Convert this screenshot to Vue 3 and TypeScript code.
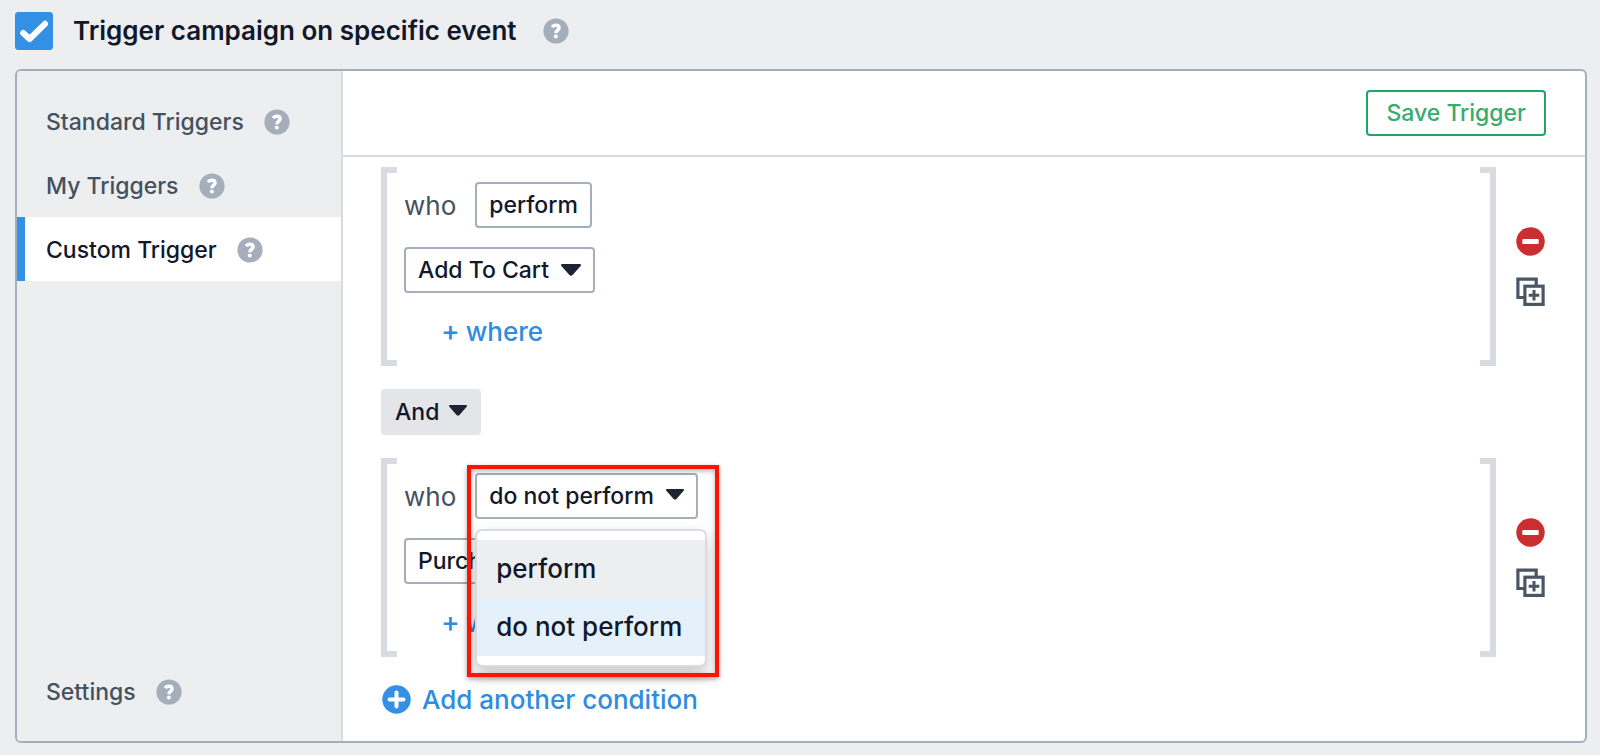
<script setup lang="ts">
import { defineComponent, h, ref } from 'vue'

interface NavItem {
  id: string
  label: string
}

interface Condition {
  id: number
  verb: string
  event: string
  open: boolean
}

const enabled = ref(true)
const activeTab = ref('custom')
const operator = ref('And')
const verbs: string[] = ['perform', 'do not perform']

const navItems: NavItem[] = [
  { id: 'standard', label: 'Standard Triggers' },
  { id: 'mine', label: 'My Triggers' },
  { id: 'custom', label: 'Custom Trigger' },
]

const conditions = ref<Condition[]>([
  { id: 1, verb: 'perform', event: 'Add To Cart', open: false },
  { id: 2, verb: 'do not perform', event: 'Purchase', open: true },
])

function pick(condition: Condition, verb: string) {
  condition.verb = verb
  condition.open = false
}

const HelpIcon = defineComponent({
  render: () =>
    h('svg', { viewBox: '0 0 26 26', width: 26, height: 26, role: 'img', 'aria-label': 'Help' }, [
      h('circle', { cx: 13, cy: 13, r: 12.6, fill: '#a5aebb' }),
      h('path', {
        d: 'M9.3 9.2C10 7.9 11.3 7.3 12.9 7.3C14.9 7.3 16.1 8.3 16.1 9.9C16.1 12.2 13 12.1 12.9 15.2',
        fill: 'none',
        stroke: '#fff',
        'stroke-width': 3.4,
      }),
      h('circle', { cx: 12.8, cy: 18.5, r: 2, fill: '#fff' }),
    ]),
})

const CaretIcon = defineComponent({
  render: () =>
    h('svg', { viewBox: '0 0 20 12', 'aria-hidden': 'true' }, [
      h('path', {
        d: 'M1.2 0H18.8C19.9 0 20.3 1.1 19.6 1.9L11.6 10.9C10.7 11.9 9.3 11.9 8.4 10.9L0.4 1.9C-0.3 1.1 0.1 0 1.2 0Z',
        fill: '#1c2333',
      }),
    ]),
})
</script>

<template>
  <div class="page">
    <header class="title-row">
      <label class="toggle">
        <span class="check">
          <input v-model="enabled" type="checkbox" />
          <svg v-if="enabled" viewBox="0 0 38 38" aria-hidden="true">
            <path d="M8.2 21L14.6 27L30 11.8" fill="none" stroke="#fff" stroke-width="6" stroke-linecap="round" stroke-linejoin="round" />
          </svg>
        </span>
        <span class="title">Trigger campaign on specific event</span>
      </label>
      <HelpIcon />
    </header>

    <main class="panel">
      <nav class="sidebar">
        <button
          v-for="item in navItems"
          :key="item.id"
          type="button"
          class="nav-item"
          :class="{ active: item.id === activeTab }"
          @click="activeTab = item.id"
        >
          {{ item.label }}
          <HelpIcon />
        </button>
        <button type="button" class="nav-item settings">
          Settings
          <HelpIcon />
        </button>
      </nav>

      <section class="content">
        <div class="toolbar">
          <button type="button" class="save">Save Trigger</button>
        </div>

        <div class="builder">
          <template v-for="(condition, index) in conditions" :key="condition.id">
            <label v-if="index > 0" class="picker operator">
              <select v-model="operator" aria-label="Operator">
                <option>And</option>
                <option>Or</option>
              </select>
              <CaretIcon class="caret small" />
            </label>

            <div class="condition">
              <div class="group">
                <div class="line">
                  <span class="who">who</span>
                  <div class="verb">
                    <button
                      type="button"
                      class="box"
                      aria-haspopup="listbox"
                      :aria-expanded="condition.open"
                      @click="condition.open = !condition.open"
                    >
                      {{ condition.verb }}
                      <CaretIcon v-if="index > 0" class="caret small" />
                    </button>
                    <div v-if="condition.open" class="highlight"></div>
                    <ul v-if="condition.open" class="menu" role="listbox">
                      <li
                        v-for="verb in verbs"
                        :key="verb"
                        role="option"
                        :aria-selected="verb === condition.verb"
                        :class="{ selected: verb === condition.verb }"
                        @click="pick(condition, verb)"
                      >
                        {{ verb }}
                      </li>
                    </ul>
                  </div>
                </div>
                <label class="picker event">
                  <select v-model="condition.event" aria-label="Event">
                    <option>{{ condition.event }}</option>
                  </select>
                  <CaretIcon class="caret" />
                </label>
                <button type="button" class="link where"><span class="plus">+</span> where</button>
              </div>

              <div class="actions">
                <button type="button" class="icon-button" aria-label="Remove condition">
                  <svg viewBox="0 0 29 29" width="29" height="29">
                    <circle cx="14.5" cy="14.5" r="14.2" fill="#cb2e30" />
                    <rect x="6.3" y="12" width="16.4" height="5" rx="1" fill="#fff" />
                  </svg>
                </button>
                <button type="button" class="icon-button" aria-label="Duplicate condition">
                  <svg viewBox="0 0 29 29" width="29" height="29" fill="none" stroke="#4a5663">
                    <path d="M8 20.5H1.9V2.2H20.2V8" stroke-width="3.2" />
                    <rect x="8.9" y="9.2" width="18.2" height="18.2" stroke-width="3.2" />
                    <path d="M18 13V23.6M12.7 18.3H23.3" stroke-width="3" />
                  </svg>
                </button>
              </div>
            </div>
          </template>

          <button type="button" class="link add">
            <svg viewBox="0 0 29 29" width="29" height="29" aria-hidden="true">
              <circle cx="14.5" cy="14.5" r="14.2" fill="#3490e5" />
              <path d="M14.5 7.5V21.5M7.5 14.5H21.5" stroke="#fff" stroke-width="4" stroke-linecap="round" />
            </svg>
            Add another condition
          </button>
        </div>
      </section>
    </main>
  </div>
</template>

<style>
body {
  margin: 0;
  background: #edeef0;
}
</style>

<style scoped>
.page {
  box-sizing: border-box;
  min-height: 100vh;
  padding: 12px 13px 12px 15px;
  display: flex;
  flex-direction: column;
  gap: 19px;
  font-family: Inter, 'Liberation Sans', sans-serif;
  font-size: 23px;
  font-weight: 500;
  color: #12182a;
}

button,
select {
  margin: 0;
  font: inherit;
  color: inherit;
  cursor: pointer;
}

svg {
  display: block;
  flex: none;
}

.title-row {
  display: flex;
  align-items: center;
  gap: 26px;
}

.toggle {
  display: flex;
  align-items: center;
  gap: 20px;
}

.check {
  display: grid;
  width: 38px;
  height: 38px;
}

.check > * {
  grid-area: 1 / 1;
}

.check input {
  appearance: none;
  margin: 0;
  width: 38px;
  height: 38px;
  border: 1px solid #3490e5;
  border-radius: 3px;
}

.check input:checked {
  background: #3490e5;
}

.check svg {
  pointer-events: none;
}

.title {
  font-size: 26px;
  line-height: 38px;
  font-weight: 600;
}

.panel {
  flex: 1;
  display: flex;
  border: 2px solid #a3afbd;
  border-radius: 6px;
  background: #fff;
}

.sidebar {
  flex: none;
  box-sizing: border-box;
  width: 326px;
  padding: 18px 0;
  display: flex;
  flex-direction: column;
  border-right: 2px solid #d8dce1;
  border-radius: 4px 0 0 4px;
  background: #edeef0;
}

.nav-item {
  display: flex;
  align-items: center;
  gap: 20px;
  height: 64px;
  padding: 2px 21px 0;
  border: 0;
  border-left: 8px solid transparent;
  background: none;
  color: #44515e;
}

.nav-item.active {
  border-left-color: #3490e5;
  background: #fff;
  color: #12182a;
}

.settings {
  margin-top: auto;
}

.content {
  flex: 1;
  min-width: 0;
}

.toolbar {
  display: flex;
  justify-content: flex-end;
  padding: 19px 39px;
  border-bottom: 2px solid #d8dce1;
}

.save {
  height: 46px;
  padding: 0 18px;
  border: 2px solid #1fa663;
  border-radius: 4px;
  background: #fff;
  color: #38ab6e;
}

.builder {
  display: flex;
  flex-direction: column;
  align-items: flex-start;
  gap: 23px;
  padding: 10px 40px 10px 38px;
}

.condition {
  align-self: stretch;
  display: flex;
  gap: 20px;
}

.group {
  position: relative;
  flex: 1;
  display: flex;
  flex-direction: column;
  align-items: flex-start;
  padding: 15px 23px 17px;
}

.group::before,
.group::after {
  content: '';
  position: absolute;
  top: 0;
  bottom: 0;
  width: 10px;
  border: 6px solid #d8dce1;
}

.group::before {
  left: 0;
  border-right: 0;
}

.group::after {
  right: 0;
  border-left: 0;
}

.line {
  display: flex;
  align-items: center;
  gap: 19px;
  margin-bottom: 19px;
}

.who {
  font-size: 26px;
  font-weight: 400;
  color: #44515e;
}

.verb {
  position: relative;
}

.box,
.picker select {
  box-sizing: border-box;
  height: 46px;
  padding: 0 12px;
  border: 2px solid #a3afbd;
  border-radius: 4px;
  background: #fff;
}

.box {
  display: flex;
  align-items: center;
  gap: 12px;
  white-space: nowrap;
}

.picker {
  display: grid;
  align-items: center;
}

.picker > * {
  grid-area: 1 / 1;
}

.picker select {
  appearance: none;
}

.event select {
  padding-right: 44px;
}

.operator select {
  padding-right: 39px;
  border-color: #e4e5e9;
  background: #e4e5e9;
}

.caret {
  width: 20px;
  height: 12px;
}

.caret.small {
  width: 18px;
  height: 11px;
  margin-bottom: 4px;
}

.picker .caret {
  justify-self: end;
  margin-right: 14px;
  pointer-events: none;
}

.link {
  display: flex;
  align-items: center;
  padding: 0;
  border: 0;
  background: none;
  color: #2e8ce2;
  font-size: 26px;
}

.where {
  gap: 6px;
  height: 36px;
  margin: 20px 0 0 37px;
}

.plus {
  font-size: 28px;
  line-height: 32px;
}

.add {
  gap: 11px;
  height: 38px;
  margin-left: 1px;
}

.actions {
  display: flex;
  flex-direction: column;
  gap: 21px;
  padding-top: 60px;
}

.icon-button {
  padding: 0;
  border: 0;
  background: none;
}

.highlight {
  position: absolute;
  z-index: 3;
  inset: -8px -21px -158px -8px;
  border: 4px solid #ff1200;
  box-shadow: 0 2px 5px rgba(0, 0, 0, 0.35), inset 0 2px 5px rgba(0, 0, 0, 0.3);
  pointer-events: none;
}

.menu {
  position: absolute;
  z-index: 2;
  top: 56px;
  left: 0;
  box-sizing: border-box;
  min-width: 232px;
  margin: 0;
  padding: 9px 0;
  list-style: none;
  border: 2px solid #d8dce1;
  border-radius: 7px;
  background: #fff;
  box-shadow: 0 8px 16px rgba(0, 0, 0, 0.22);
  font-size: 26px;
  white-space: nowrap;
}

.menu li {
  padding: 0 19px;
  line-height: 58px;
  background: #edeef0;
  cursor: pointer;
}

.menu li.selected {
  background: #e4f1fb;
}
</style>
